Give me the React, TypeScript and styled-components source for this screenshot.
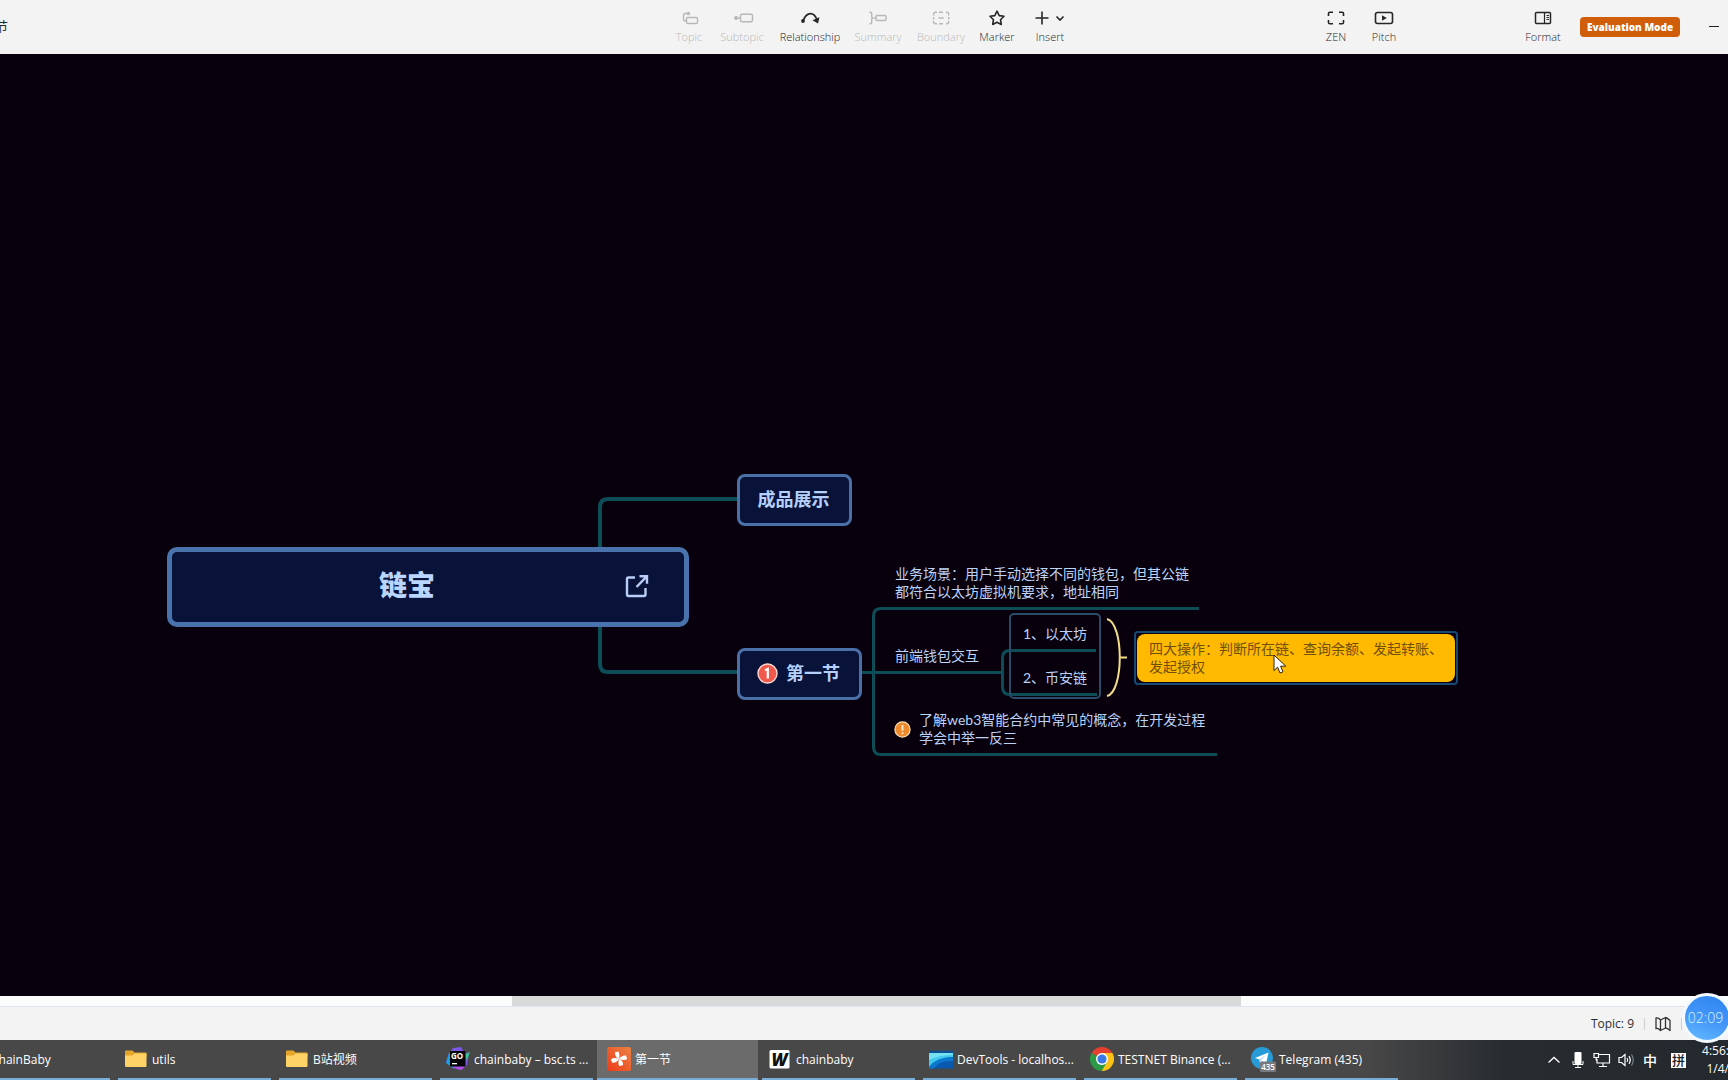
import React from "react";
import styled, { createGlobalStyle } from "styled-components";

const UI_FONT = '"Open Sans", "Noto Sans CJK SC", sans-serif';
const MAP_FONT = '"Lato", "Noto Sans CJK SC", sans-serif';
const WIRE = "#0d4d57";

const GlobalStyle = createGlobalStyle`
  * { box-sizing: border-box; }
  html, body, #root { height: 100%; }
  body { margin: 0; overflow: hidden; font-family: ${UI_FONT}; }
  button { font: inherit; color: inherit; border: 0; background: none; padding: 0; }
`;

const Window = styled.div`
  position: relative;
  display: flex;
  flex-direction: column;
  height: 100vh;
  overflow: hidden;
  background: #f3f3f4;
`;

/* ---------- header ---------- */

const Header = styled.header`
  display: grid;
  grid-template-columns: 1fr auto 1fr;
  flex: none;
  height: 54px;
  background: #f3f3f4;
  color: #262626;
`;

const DocumentTitle = styled.h1`
  margin: 0 0 0 -31px;
  font-size: 13px;
  font-weight: 400;
  line-height: 52px;
  white-space: nowrap;
`;

const Tools = styled.nav`
  display: flex;
  padding-left: 18px;
`;

const HeaderEnd = styled.div`
  display: flex;
  justify-content: flex-end;
  padding-right: 8px;
`;

const Spacer = styled.span<{ $width: number }>`
  flex: none;
  width: ${(p) => p.$width}px;
`;

const ToolButton = styled.button<{ $width: number }>`
  display: flex;
  flex-direction: column;
  align-items: center;
  flex: none;
  width: ${(p) => p.$width}px;
  height: 54px;
  padding-top: 8px;
  font-size: 11px;
  font-weight: 300;
  line-height: 18px;
  white-space: nowrap;
  color: #262626;
  &:disabled { color: #b8b8b9; }
  svg { flex: none; display: block; }
`;

const EvaluationButton = styled.button`
  align-self: center;
  height: 20px;
  margin-right: 28px;
  width: 100px;
  border-radius: 4px;
  background: #cf5d09;
  color: #fff;
  font-size: 10px;
  font-weight: 800;
  line-height: 20px;
  white-space: nowrap;
`;

const MinimizeButton = styled.button`
  display: flex;
  align-items: center;
  height: 51px;
`;

/* ---------- canvas ---------- */

const Canvas = styled.main`
  position: relative;
  flex: 1;
  min-height: 0;
  overflow: hidden;
  background: #08010d;
  font-family: ${MAP_FONT};
  color: #bdd3f8;
`;

const Wires = styled.svg`
  position: absolute;
  left: 0;
  top: 0;
  fill: none;
  stroke: ${WIRE};
  pointer-events: none;
`;

interface Place { $x: number; $y: number }

const Node = styled.div<Place>`
  position: absolute;
  left: ${(p) => p.$x}px;
  top: ${(p) => p.$y}px;
`;

const RootNode = styled(Node)`
  display: grid;
  grid-template-columns: 1fr auto 1fr;
  align-items: center;
  width: 522px;
  height: 80px;
  padding: 0 35px 4px;
  border: 5px solid #4a73ad;
  border-radius: 10px;
  background: #091238;
  color: #b9d6ff;
  font-size: 28px;
  font-weight: 900;
  line-height: 40px;
`;

const LinkButton = styled.a`
  grid-column: 3;
  justify-self: end;
  display: flex;
  padding-top: 2px;
  color: #b9cdf8;
`;

const RootText = styled.span`
  grid-column: 2;
  margin-right: 42px;
`;

const MainNode = styled(Node)<{ $width: number }>`
  display: flex;
  align-items: center;
  justify-content: center;
  gap: 8px;
  width: ${(p) => p.$width}px;
  height: 52px;
  padding: 0 2px 2px 0;
  border: 3px solid #4b70a8;
  border-radius: 8px;
  background: #091238;
  color: #b5d0fa;
  font-size: 18px;
  font-weight: 700;
  line-height: 26px;
`;

const Topic = styled(Node)`
  display: flex;
  align-items: center;
  gap: 8px;
  font-size: 14px;
  line-height: 18px;
  white-space: nowrap;
`;

const Boundary = styled(Node)`
  width: 92px;
  height: 86px;
  border: 2px solid #294c68;
  border-radius: 5px;
`;

const SelectedTopic = styled(Node)`
  padding: 1px;
  border: 2px solid #174a78;
  border-radius: 4px;
  width: 324px;
  height: 54px;
`;

const SummaryFill = styled.div`
  height: 48px;
  padding: 6px 12px;
  border-radius: 8px;
  background: #ffb900;
  color: #70500c;
  font-size: 14px;
  line-height: 18px;
  white-space: nowrap;
`;

const Cursor = styled(Node)`
  display: flex;
`;

/* ---------- scroll and status ---------- */

const ScrollTrack = styled.div`
  display: grid;
  grid-template-columns: 512fr 729fr 487fr;
  flex: none;
  height: 11px;
  background: #fbfdfd;
  border-bottom: 1px solid #e3e2ec;
`;

const ScrollThumb = styled.div`
  grid-column: 2;
  background: #d8dada;
`;

const StatusBar = styled.footer`
  display: flex;
  align-items: center;
  justify-content: flex-end;
  flex: none;
  gap: 10px;
  height: 33px;
  padding-right: 46px;
  background: #f3f3f4;
  color: #2e2e2e;
  font-size: 12px;
  line-height: 18px;
`;

const Divider = styled.span`
  width: 1px;
  height: 12px;
  background: #cfcfcf;
`;

const MapButton = styled.button`
  display: flex;
`;

const Timer = styled.div`
  position: absolute;
  right: -4px;
  bottom: 37px;
  width: 50px;
  height: 50px;
  padding-right: 3px;
  border: 3px solid #f3faff;
  border-radius: 50%;
  background: linear-gradient(200deg, #3388f2 15%, #4598f8 55%, #64bcff 100%);
  color: #d9f2ff;
  font-size: 14px;
  font-weight: 300;
  line-height: 43px;
  text-align: center;
`;

/* ---------- taskbar ---------- */

const Taskbar = styled.div`
  display: flex;
  justify-content: space-between;
  flex: none;
  height: 40px;
  background: linear-gradient(90deg, #484848 0, #484848 79%, #282c30 87%, #23292e 100%);
  color: #fff;
  font-size: 12px;
`;

const Tasks = styled.div`
  display: flex;
  margin-left: -47px;
`;

const Task = styled.button<{ $active?: boolean }>`
  display: flex;
  align-items: center;
  gap: 4px;
  flex: none;
  width: 161px;
  height: 40px;
  padding: 0 0 2px 10px;
  background:
    linear-gradient(#79add9, #79add9) center bottom / ${(p) => (p.$active ? "100%" : "calc(100% - 8px)")} 2px no-repeat,
    ${(p) => (p.$active ? "#6b6b6b" : "transparent")};
  text-align: left;
  white-space: nowrap;
  svg { flex: none; display: block; }
`;

const Tray = styled.div`
  display: flex;
  align-items: center;
  flex: none;
  gap: 4px;
`;

const TrayButton = styled.button`
  display: flex;
  align-items: center;
  justify-content: center;
  width: 20px;
  height: 40px;
  font-size: 14px;
  font-weight: 500;
`;

const InputMode = styled.span`
  width: 15px;
  height: 15px;
  margin: 0 9px 0 7px;
  background: #fff;
  color: #1c2126;
  font-size: 13px;
  font-weight: 500;
  line-height: 14px;
  text-align: center;
`;

const Clock = styled.time`
  display: flex;
  flex-direction: column;
  align-items: flex-end;
  width: 30px;
  margin-right: -1px;
  font-size: 12px;
  line-height: 18px;
`;

/* ---------- icons ---------- */

const Glyph = ({ width = 24, children }: { width?: number; children: React.ReactNode }) => (
  <svg width={width} height={20} viewBox={`0 0 ${width} 20`} fill="none" stroke="currentColor" strokeWidth={1.4} aria-hidden="true">
    {children}
  </svg>
);

const icons = {
  topic: (
    <Glyph>
      <rect x="9.5" y="9.5" width="11" height="6" rx="1.5" />
      <path d="M9 13H8.5Q6.5 13 6.5 11V7.5Q6.5 5.5 8.5 5.5H11" />
      <circle cx="11.5" cy="5.5" r="1.7" fill="currentColor" stroke="none" />
    </Glyph>
  ),
  subtopic: (
    <Glyph>
      <rect x="10.5" y="6.2" width="12" height="7.6" rx="1.5" />
      <path d="M6 10h4.5" />
      <circle cx="6" cy="10" r="2" fill="currentColor" stroke="none" />
    </Glyph>
  ),
  relationship: (
    <Glyph>
      <path d="M5 13C7 7.5 10 5.6 12.5 5.6S17.5 8 19 11.5" strokeWidth="1.8" />
      <circle cx="5" cy="13" r="1.9" fill="currentColor" stroke="none" />
      <path d="M14.5 12.2 21.5 9.2 20 15.6Z" fill="currentColor" stroke="none" />
    </Glyph>
  ),
  summary: (
    <Glyph>
      <path d="M3.5 4.2H4.5Q5.7 4.2 5.7 5.6V8.5Q5.7 10 7.2 10Q5.7 10 5.7 11.5V14.4Q5.7 15.8 4.5 15.8H3.5" />
      <path d="M7.5 10H10" />
      <rect x="10" y="7.5" width="10" height="5" rx="1" />
    </Glyph>
  ),
  boundary: (
    <Glyph>
      <path d="M10 4.2H14M17 4.2H17.7Q19.7 4.2 19.7 6.2V7.5M19.7 9V11.5M19.7 13V13.8Q19.7 15.8 17.7 15.8H17M14 15.8H10M8 15.8H6.5Q4.6 15.8 4.6 13.8V13M4.6 11.5V9M4.6 7.5V6.2Q4.6 4.2 6.5 4.2H8M9.5 10H14.7" />
    </Glyph>
  ),
  marker: (
    <Glyph>
      <path d="M12 3.2 14.2 7.6 19 8.3 15.5 11.7 16.3 16.5 12 14.3 7.7 16.5 8.5 11.7 5 8.3 9.8 7.6Z" strokeWidth="1.6" strokeLinejoin="round" />
    </Glyph>
  ),
  insert: (
    <Glyph width={32}>
      <path d="M1.5 10H14.5M8 3.5V16.5" strokeWidth="1.6" />
      <path d="M22.5 8.5 26 12 29.5 8.5" strokeWidth="1.6" />
    </Glyph>
  ),
  zen: (
    <Glyph>
      <path d="M4.5 8V5.5Q4.5 4.2 5.8 4.2H9M15 4.2H18.2Q19.5 4.2 19.5 5.5V8M19.5 12V14.5Q19.5 15.8 18.2 15.8H15M9 15.8H5.8Q4.5 15.8 4.5 14.5V12" strokeWidth="1.6" />
    </Glyph>
  ),
  pitch: (
    <Glyph>
      <rect x="3.5" y="4.5" width="17" height="11" rx="2" strokeWidth="1.6" />
      <path d="M10 7.2V12.8L14.8 10Z" fill="currentColor" stroke="none" />
    </Glyph>
  ),
  format: (
    <Glyph>
      <rect x="4.5" y="4.5" width="15" height="11" rx="1" strokeWidth="1.5" />
      <path d="M13.5 4.5V15.5M15.5 7.5H18M15.5 9.5H18M15.5 11.5H18" strokeWidth="1.2" />
    </Glyph>
  ),
};

const FolderIcon = () => (
  <svg width="24" height="24" viewBox="0 0 24 24" aria-hidden="true">
    <path d="M1 4.5Q1 3.5 2 3.5H8.5L10.5 5.5H21.5Q22.5 5.5 22.5 6.5V10H1Z" fill="#e5a528" />
    <path d="M1 8.5H8.5L10.5 6.5H22.5V19Q22.5 20 21.5 20H2Q1 20 1 19Z" fill="#ffd268" />
  </svg>
);

const GoLandIcon = () => (
  <svg width="24" height="24" viewBox="0 0 24 24" aria-hidden="true">
    <path d="M7 1 15 0 18 5 23 6 21 18 15 23 7 21 0 15 3 6Z" fill="#7b58e8" />
    <path d="M3 6 0 16 8 22 6 12Z" fill="#1b9ce5" />
    <path d="M18 8 24 5 21 13Z" fill="#36c98a" />
    <path d="M6 20 15 23 20 19Z" fill="#b84ee8" />
    <rect x="4" y="4" width="15.5" height="15.5" fill="#050505" />
    <text x="5" y="11.5" fontSize="8" fontWeight="700" fill="#fff" fontFamily="Open Sans, sans-serif">GO</text>
    <rect x="6" y="16" width="5" height="1.3" fill="#fff" />
  </svg>
);

const XMindIcon = () => (
  <svg width="24" height="24" viewBox="0 0 24 24" aria-hidden="true">
    <defs>
      <linearGradient id="xmind" x1="0" y1="1" x2="1" y2="0">
        <stop offset="0" stopColor="#ee3d18" />
        <stop offset="1" stopColor="#e98245" />
      </linearGradient>
    </defs>
    <rect width="24" height="24" rx="2" fill="url(#xmind)" />
    <g fill="#fff">
      <path d="M8 5.2 11.5 4.5Q13.2 7.5 12 12Q7.5 10 8 5.2Z" />
      <path d="M12 12Q14.5 8 19 8.5L20.2 12Q17 14.2 12 12Z" />
      <path d="M12 12Q16.5 13.8 16 18L12.5 19.3Q10.500 16.500 12 12Z" />
      <path d="M12 12Q9.500 16.200 5 15.600L4 12.300Q7 9.800 12 12Z" />
    </g>
  </svg>
);

const WordIcon = () => (
  <svg width="24" height="24" viewBox="0 0 24 24" aria-hidden="true">
    <rect x="1.5" y="3" width="20" height="18.5" rx="1.5" fill="#fff" />
    <text x="11.5" y="18.5" fontSize="17" fontWeight="800" fontStyle="italic" textAnchor="middle" fill="#111" fontFamily="Open Sans, sans-serif">W</text>
  </svg>
);

const DevToolsIcon = () => (
  <svg width="24" height="24" viewBox="0 0 24 24" aria-hidden="true">
    <rect y="4.5" width="24" height="17" fill="#0a59ae" />
    <path d="M0 6H24V10Q8 10 0 20Z" fill="#43c8ee" />
    <path d="M0 6H24V8Q9 8 0 13Z" fill="#76e0f3" />
    <path d="M0 20Q8 10 24 10V14Q10 13 5 21.5H0Z" fill="#0b78cf" />
    <rect y="3.5" width="24" height="2.5" fill="#104f91" />
  </svg>
);

const ChromeIcon = () => (
  <svg width="24" height="24" viewBox="0 0 24 24" aria-hidden="true">
    <path d="M12 12 1.6 6A12 12 0 0 1 22.4 6Z" fill="#e5402f" />
    <path d="M12 12 22.4 6A12 12 0 0 1 12 24Z" fill="#fbc116" />
    <path d="M12 12 12 24A12 12 0 0 1 1.6 6Z" fill="#2c9a45" />
    <path d="M12 6H22.4L17.2 15 12 12Z" fill="#fbc116" />
    <path d="M12 24 17.2 15 12 12 6.8 15Z" fill="#2c9a45" />
    <path d="M12 24 17.2 15H17.5L22 17A12 12 0 0 1 12 24Z" fill="#fbc116" />
    <circle cx="12" cy="12" r="6" fill="#fff" />
    <circle cx="12" cy="12" r="4.6" fill="#3b78e7" />
  </svg>
);

const TelegramIcon = () => (
  <svg width="24" height="26" viewBox="0 0 24 26" overflow="visible" aria-hidden="true">
    <circle cx="11" cy="12" r="11" fill="#279bd8" />
    <path d="M4 12 17.5 6.5 15 18 11 15.2 9 17 8.5 13.5Z" fill="#fff" />
    <path d="M8.5 13.5 15 8.8 10 14.5 9 17Z" fill="#b9d9ea" />
    <rect x="9" y="15.5" width="16" height="10.5" rx="1.5" fill="#777b80" />
    <text x="17" y="24" fontSize="8" fontWeight="600" textAnchor="middle" fill="#fff" fontFamily="Open Sans, sans-serif">435</text>
  </svg>
);

const PriorityBadge = () => (
  <svg width="21" height="21" viewBox="0 0 21 21" role="img" aria-label="Priority 1">
    <circle cx="10.5" cy="10.5" r="9.5" fill="#ef584b" stroke="#ffd9d2" strokeWidth="1.4" />
    <path d="M8 7.3 10.8 6V15.5" fill="none" stroke="#fff" strokeWidth="2.2" />
  </svg>
);

const AlertBadge = () => (
  <svg width="17" height="17" viewBox="0 0 17 17" role="img" aria-label="Important">
    <circle cx="8.5" cy="8.5" r="7.6" fill="#ee8a2b" stroke="#ffe2b8" strokeWidth="1.2" />
    <path d="M8.5 4V9.8M8.5 11.3V13.2" stroke="#ffeccb" strokeWidth="1.8" />
  </svg>
);

const tools = [
  { label: "Topic", icon: icons.topic, width: 36, disabled: true },
  { label: "Subtopic", icon: icons.subtopic, width: 70, disabled: true },
  { label: "Relationship", icon: icons.relationship, width: 66 },
  { label: "Summary", icon: icons.summary, width: 70, disabled: true },
  { label: "Boundary", icon: icons.boundary, width: 56, disabled: true },
  { label: "Marker", icon: icons.marker, width: 56 },
  { label: "Insert", icon: icons.insert, width: 50 },
];

const tasks = [
  { label: "ChainBaby", icon: <FolderIcon /> },
  { label: "utils", icon: <FolderIcon /> },
  { label: "B站视频", icon: <FolderIcon /> },
  { label: "chainbaby – bsc.ts ...", icon: <GoLandIcon /> },
  { label: "第一节", icon: <XMindIcon />, active: true },
  { label: "chainbaby", icon: <WordIcon /> },
  { label: "DevTools - localhos...", icon: <DevToolsIcon /> },
  { label: "TESTNET Binance (...", icon: <ChromeIcon /> },
  { label: "Telegram (435)", icon: <TelegramIcon /> },
];

function MindMap() {
  return (
    <Canvas>
      <Wires width="1480" height="740" viewBox="0 0 1480 740" aria-hidden="true">
        <path d="M737 445H608Q600 445 600 453V610Q600 618 608 618H737" strokeWidth="4" />
        <g strokeWidth="3">
          <path d="M862 618.5H1002" />
          <path d="M1199 554.5H881Q873.5 554.5 873.5 562V693Q873.5 700.5 881 700.5H1217" />
          <path d="M1096 596.5H1010Q1002.5 596.5 1002.5 604V633Q1002.5 640.5 1010 640.5H1097" />
        </g>
        <path d="M1107 565C1124 569 1124 638 1107 642M1120 603.5H1127" stroke="#f2dc86" strokeWidth="2" />
      </Wires>

      <RootNode $x={167} $y={493}>
        <RootText>链宝</RootText>
        <LinkButton href="#" aria-label="Open link">
          <svg width="24" height="24" viewBox="0 0 24 24" fill="none" stroke="currentColor" strokeWidth="2.4" aria-hidden="true">
            <path d="M10 3.5H3.5Q2 3.5 2 5V20.5Q2 22 3.5 22H19Q20.5 22 20.5 20.5V14" />
            <path d="M14.5 2.2H22V9.7M22 2.2 11.5 13" />
          </svg>
        </LinkButton>
      </RootNode>
      <MainNode $x={737} $y={420} $width={115}>成品展示</MainNode>
      <MainNode $x={737} $y={594} $width={125}>
        <PriorityBadge />
        第一节
      </MainNode>

      <Topic $x={895} $y={511}>
        业务场景：用户手动选择不同的钱包，但其公链
        <br />
        都符合以太坊虚拟机要求，地址相同
      </Topic>
      <Topic $x={895} $y={593}>前端钱包交互</Topic>
      <Topic $x={1023} $y={571}>1、以太坊</Topic>
      <Topic $x={1023} $y={615}>2、币安链</Topic>
      <Topic $x={894} $y={657}>
        <AlertBadge />
        <span>
          了解web3智能合约中常见的概念，在开发过程
          <br />
          学会中举一反三
        </span>
      </Topic>

      <Boundary $x={1009} $y={559} />
      <SelectedTopic $x={1134} $y={577}>
        <SummaryFill>
          四大操作：判断所在链、查询余额、发起转账、
          <br />
          发起授权
        </SummaryFill>
      </SelectedTopic>
      <Cursor $x={1273} $y={600}>
        <svg width="14" height="20" viewBox="0 0 14 20" aria-hidden="true">
          <path d="M1 1V16.5L4.6 13.2 7 19 10 17.8 7.6 12.2H12.8Z" fill="#fff" stroke="#33240a" strokeWidth="1" />
        </svg>
      </Cursor>
    </Canvas>
  );
}

export default function App() {
  return (
    <Window>
      <GlobalStyle />
      <Header>
        <DocumentTitle>第一节</DocumentTitle>
        <Tools aria-label="Insert tools">
          {tools.map((t) => (
            <ToolButton key={t.label} $width={t.width} disabled={t.disabled}>
              {t.icon}
              {t.label}
            </ToolButton>
          ))}
        </Tools>
        <HeaderEnd>
          <ToolButton $width={48}>{icons.zen}ZEN</ToolButton>
          <ToolButton $width={48}>{icons.pitch}Pitch</ToolButton>
          <Spacer $width={111} />
          <ToolButton $width={48}>{icons.format}Format</ToolButton>
          <Spacer $width={13} />
          <EvaluationButton>Evaluation Mode</EvaluationButton>
          <MinimizeButton aria-label="Minimize">
            <svg width="12" height="2" viewBox="0 0 12 2" aria-hidden="true">
              <path d="M1 1.5H11" stroke="#222" strokeWidth="1" />
            </svg>
          </MinimizeButton>
        </HeaderEnd>
      </Header>

      <MindMap />

      <ScrollTrack>
        <ScrollThumb />
      </ScrollTrack>
      <StatusBar>
        <span>Topic: 9</span>
        <Divider />
        <MapButton aria-label="Map overview">
          <svg width="16" height="16" viewBox="0 0 16 16" fill="none" stroke="#333" strokeWidth="1.3" strokeLinejoin="round" aria-hidden="true">
            <path d="M1 2Q3.5 1.5 5.5 4L10.500 1.500Q12.500 2 15 4.500V14.500Q12.500 12 10.500 12L5.500 14.500Q3.500 12 1 12.500ZM5.500 4V14.500M10.500 1.500V12" />
          </svg>
        </MapButton>
        <Divider />
      </StatusBar>

      <Taskbar>
        <Tasks>
          {tasks.map((t) => (
            <Task key={t.label} $active={t.active}>
              {t.icon}
              {t.label}
            </Task>
          ))}
        </Tasks>
        <Tray>
          <TrayButton aria-label="Show hidden icons">
            <svg width="14" height="8" viewBox="0 0 14 8" fill="none" stroke="#fff" strokeWidth="1.3" aria-hidden="true">
              <path d="M1.5 6.5 7 1.5 12.5 6.5" />
            </svg>
          </TrayButton>
          <TrayButton aria-label="Microphone">
            <svg width="12" height="16" viewBox="0 0 12 16" fill="none" stroke="#fff" aria-hidden="true">
              <rect x="2.5" y="0" width="7" height="12" rx="1" fill="#fff" stroke="none" />
              <path d="M1 9V12.5H11V9M6 12.5V15.5M3 15.5H9" />
            </svg>
          </TrayButton>
          <TrayButton aria-label="Network">
            <svg width="18" height="16" viewBox="0 0 18 16" fill="none" stroke="#fff" strokeWidth="1.2" aria-hidden="true">
              <path d="M6 2.5H16.5V11H4V7M10 11V14.5M6 14.5H14" />
              <path d="M1 1.5H5.5V5.5H1ZM3.2 5.5V8H4" />
            </svg>
          </TrayButton>
          <TrayButton aria-label="Volume">
            <svg width="17" height="16" viewBox="0 0 17 16" fill="none" stroke="#fff" strokeWidth="1.2" aria-hidden="true">
              <path d="M1 5.5H3.5L7 2.5V13.5L3.5 10.5H1ZM9 6Q10.5 8 9 10M11 4.2Q13.5 8 11 11.8" />
              <path d="M13.5 2.5Q17 8 13.5 13.5" stroke="#788087" />
            </svg>
          </TrayButton>
          <TrayButton aria-label="Input language">中</TrayButton>
          <InputMode>拼</InputMode>
          <Clock>
            <span>4:56:</span>
            <span>1/4/</span>
          </Clock>
        </Tray>
      </Taskbar>
      <Timer>02:09</Timer>
    </Window>
  );
}
